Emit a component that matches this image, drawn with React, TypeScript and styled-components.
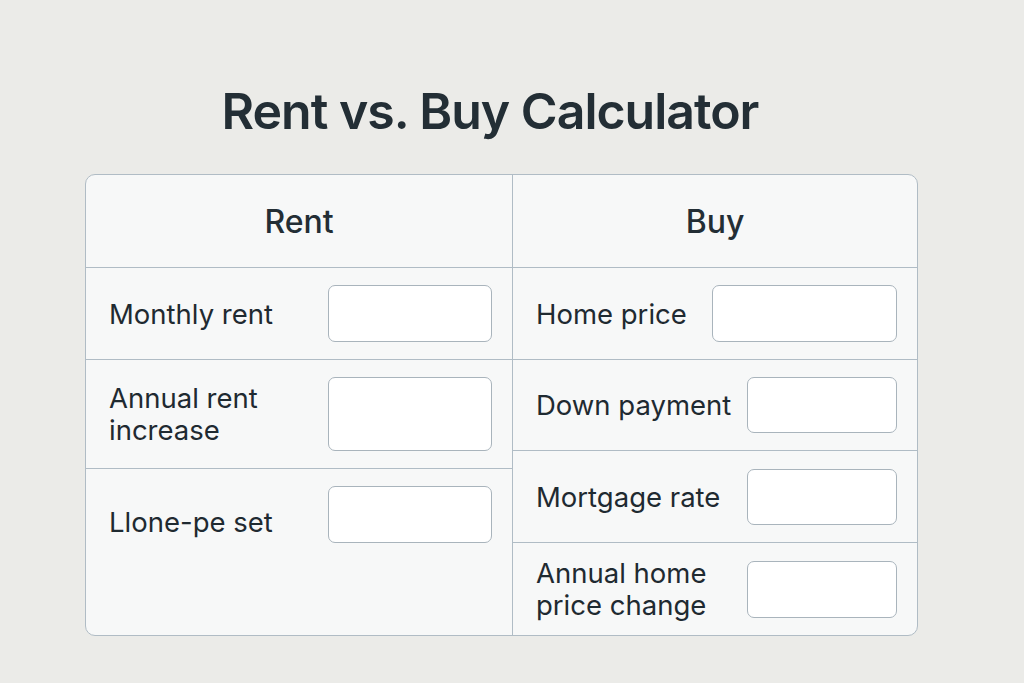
import styled, { createGlobalStyle } from 'styled-components';

type Field = {
  label: string;
  height: number;
  inputWidth: number;
  inputHeight: number;
  align?: 'center' | 'start';
};

const rentFields: Field[] = [
  { label: 'Monthly rent', height: 92, inputWidth: 164, inputHeight: 57 },
  { label: 'Annual rent\nincrease', height: 109, inputWidth: 164, inputHeight: 74 },
  { label: 'Llone-pe set', height: 166, inputWidth: 164, inputHeight: 57, align: 'start' },
];

const buyFields: Field[] = [
  { label: 'Home price', height: 92, inputWidth: 185, inputHeight: 57 },
  { label: 'Down payment', height: 91, inputWidth: 150, inputHeight: 56 },
  { label: 'Mortgage rate', height: 92, inputWidth: 150, inputHeight: 56 },
  { label: 'Annual home\nprice change', height: 92, inputWidth: 150, inputHeight: 57 },
];

const GlobalStyle = createGlobalStyle`
  html, body {
    margin: 0;
    padding: 0;
    background: #ebebe8;
  }
  body {
    font-family: Inter, 'Noto Sans', sans-serif;
    color: #1f2a31;
  }
`;

const Page = styled.div`
  width: 1024px;
  height: 683px;
  display: flex;
  flex-direction: column;
  align-items: center;
  padding-top: 80px;
  box-sizing: border-box;
`;

const Title = styled.h1`
  margin: 0 44px 0 0;
  font-size: 50px;
  font-weight: 600;
  line-height: 62px;
  letter-spacing: -1px;
  color: #232e35;
`;

const Card = styled.div`
  margin: 32px 21px 0 0;
  width: 833px;
  box-sizing: border-box;
  display: grid;
  grid-template-columns: 427px 1fr;
  border: 1px solid #b0bcc5;
  border-radius: 10px;
  background: #f7f8f8;
  overflow: hidden;
`;

const Column = styled.div<{ $divided?: boolean }>`
  display: flex;
  flex-direction: column;
  border-right: ${p => (p.$divided ? '1px solid #b0bcc5' : 'none')};
`;

const Heading = styled.div`
  height: 92px;
  display: flex;
  align-items: center;
  justify-content: center;
  border-bottom: 1px solid #b0bcc5;
  font-size: 32px;
  font-weight: 500;
  color: #232e35;
  padding-top: 2px;
  box-sizing: content-box;
  margin-top: -2px;
`;

const Row = styled.div<{ $height: number; $align: 'center' | 'start'; $last: boolean }>`
  height: ${p => p.$height}px;
  box-sizing: border-box;
  display: flex;
  align-items: ${p => (p.$align === 'start' ? 'flex-start' : 'center')};
  padding: ${p => (p.$align === 'start' ? '17px' : '0')} 20px 0 23px;
  border-bottom: ${p => (p.$last ? 'none' : '1px solid #b0bcc5')};
`;

const Label = styled.span<{ $offset: boolean }>`
  flex: 1;
  font-size: 27.5px;
  line-height: 32px;
  white-space: pre-line;
  padding-top: ${p => (p.$offset ? '20px' : '0')};
`;

const Input = styled.input<{ $width: number; $height: number }>`
  width: ${p => p.$width}px;
  height: ${p => p.$height}px;
  box-sizing: border-box;
  border: 1px solid #a9b4bc;
  border-radius: 7px;
  background: #ffffff;
  outline: none;
  font: inherit;
  font-size: 22px;
  padding: 0 12px;
`;

const FieldList = ({ fields }: { fields: Field[] }) => (
  <>
    {fields.map((f, i) => {
      const align = f.align ?? 'center';
      return (
        <Row key={f.label} $height={f.height} $align={align} $last={i === fields.length - 1}>
          <Label $offset={align === 'start'}>{f.label}</Label>
          <Input type="text" $width={f.inputWidth} $height={f.inputHeight} />
        </Row>
      );
    })}
  </>
);

const App = () => (
  <>
    <GlobalStyle />
    <Page>
      <Title>Rent vs. Buy Calculator</Title>
      <Card>
        <Column $divided>
          <Heading>Rent</Heading>
          <FieldList fields={rentFields} />
        </Column>
        <Column>
          <Heading>Buy</Heading>
          <FieldList fields={buyFields} />
        </Column>
      </Card>
    </Page>
  </>
);

export default App;
